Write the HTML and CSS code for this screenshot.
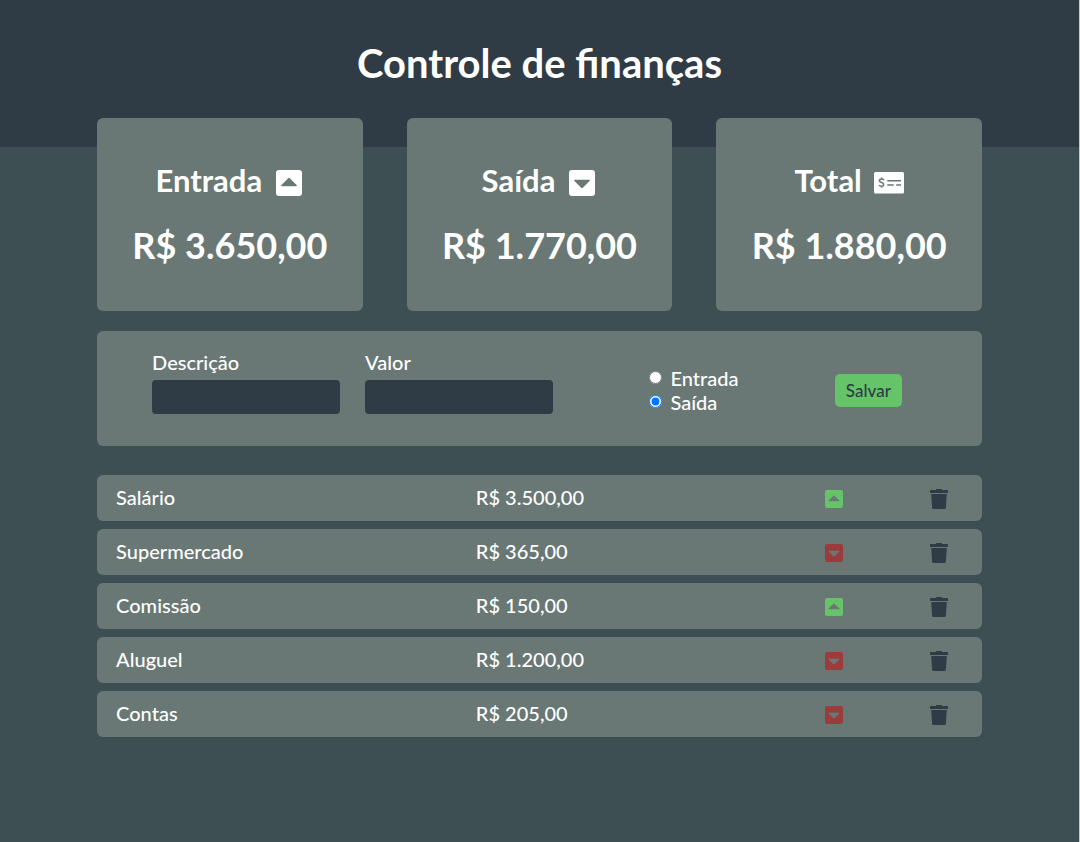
FILE: index.html
```html
<!DOCTYPE html>
<html lang="pt-BR">
<head>
<meta charset="utf-8">
<meta name="viewport" content="width=device-width, initial-scale=1">
<title>Controle de finanças</title>
<link rel="stylesheet" href="styles.css">
</head>
<body>
<svg class="sprite" aria-hidden="true">
  <symbol id="caret-up" viewBox="0 0 26 26">
    <path fill-rule="evenodd" d="M3 0H23A3 3 0 0 1 26 3V23A3 3 0 0 1 23 26H3A3 3 0 0 1 0 23V3A3 3 0 0 1 3 0ZM12.2 8.2L5.2 15.2Q4.800 16.300 6 16.300H20Q21.200 16.300 20.800 15.200L13.800 8.200Q13 7.500 12.200 8.200Z"/>
  </symbol>
  <symbol id="caret-down" viewBox="0 0 26 26">
    <path fill-rule="evenodd" d="M3 0H23A3 3 0 0 1 26 3V23A3 3 0 0 1 23 26H3A3 3 0 0 1 0 23V3A3 3 0 0 1 3 0ZM12.200 17.800L5.200 10.800Q4.800 9.700 6 9.700H20Q21.200 9.700 20.800 10.800L13.800 17.800Q13 18.500 12.200 17.800Z"/>
  </symbol>
  <symbol id="check" viewBox="0 0 30 22">
    <rect width="30" height="21.500" rx="1.500"/>
    <path class="cut" d="M10 7.900C9.300 7.300 8.600 7.100 7.600 7.100C6.200 7.100 5.400 7.700 5.400 8.700C5.400 11.100 9.700 9.900 9.700 12.500C9.700 13.600 8.900 14.200 7.500 14.200C6.400 14.200 5.600 13.900 4.900 13.300M7.600 5.500V7.200M7.600 14V15.700M13.300 8.700H27M13.300 12.900H19.700M22.200 12.900H27"/>
  </symbol>
  <symbol id="trash" viewBox="0 0 18 20">
    <path d="M6 1V.6Q6 0 6.600 0H11.400Q12 0 12 .6V1H17.400Q18 1 18 1.600V3.400Q18 4 17.400 4H.6Q0 4 0 3.400V1.600Q0 1 .6 1ZM1.200 5H16.800L15.900 18.500Q15.800 20 14.400 20H3.600Q2.200 20 2.100 18.500Z"/>
  </symbol>
</svg>

<header class="header">
  <h1 class="title">Controle de finanças</h1>
</header>

<main class="content">
  <section class="cards">
    <article class="card">
      <h2 class="card-title">Entrada <svg class="card-icon"><use href="#caret-up"/></svg></h2>
      <p class="card-amount">R$ 3.650,00</p>
    </article>
    <article class="card">
      <h2 class="card-title">Saída <svg class="card-icon"><use href="#caret-down"/></svg></h2>
      <p class="card-amount">R$ 1.770,00</p>
    </article>
    <article class="card">
      <h2 class="card-title">Total <svg class="card-icon card-icon-wide"><use href="#check"/></svg></h2>
      <p class="card-amount">R$ 1.880,00</p>
    </article>
  </section>

  <form class="form">
    <div class="fields">
      <div class="field">
        <label class="field-label" for="desc">Descrição</label>
        <input class="text-input" id="desc" type="text">
      </div>
      <div class="field">
        <label class="field-label" for="valor">Valor</label>
        <input class="text-input" id="valor" type="number">
      </div>
    </div>
    <div class="options">
      <div class="option">
        <input class="radio" type="radio" id="entrada" name="tipo">
        <label for="entrada">Entrada</label>
      </div>
      <div class="option">
        <input class="radio" type="radio" id="saida" name="tipo" checked>
        <label for="saida">Saída</label>
      </div>
    </div>
    <button class="save" type="button">Salvar</button>
  </form>

  <table class="entries">
    <colgroup><col class="col-desc"><col class="col-value"><col class="col-type"><col class="col-action"></colgroup>
    <tbody>
      <tr><td>Salário</td><td>R$ 3.500,00</td><td><svg class="type income"><use href="#caret-up"/></svg></td><td><button class="remove" type="button" aria-label="Excluir Salário"><svg class="trash"><use href="#trash"/></svg></button></td></tr>
      <tr><td>Supermercado</td><td>R$ 365,00</td><td><svg class="type expense"><use href="#caret-down"/></svg></td><td><button class="remove" type="button" aria-label="Excluir Supermercado"><svg class="trash"><use href="#trash"/></svg></button></td></tr>
      <tr><td>Comissão</td><td>R$ 150,00</td><td><svg class="type income"><use href="#caret-up"/></svg></td><td><button class="remove" type="button" aria-label="Excluir Comissão"><svg class="trash"><use href="#trash"/></svg></button></td></tr>
      <tr><td>Aluguel</td><td>R$ 1.200,00</td><td><svg class="type expense"><use href="#caret-down"/></svg></td><td><button class="remove" type="button" aria-label="Excluir Aluguel"><svg class="trash"><use href="#trash"/></svg></button></td></tr>
      <tr><td>Contas</td><td>R$ 205,00</td><td><svg class="type expense"><use href="#caret-down"/></svg></td><td><button class="remove" type="button" aria-label="Excluir Contas"><svg class="trash"><use href="#trash"/></svg></button></td></tr>
    </tbody>
  </table>
</main>
</body>
</html>
```

FILE: styles.css
```css
:root {
  --dark: #2f3c46;
  --page: #3d4f53;
  --panel: #697874;
  --green: #65c368;
  --red: #9c3b3c;
}

* {
  box-sizing: border-box;
  margin: 0;
  padding: 0;
}

html {
  background: var(--page);
}

body {
  min-height: 100vh;
  border-right: 1px solid #c3cbcb;
  color: #fff;
  font-family: Lato, sans-serif;
  font-size: 20px;
  font-weight: 500;
  line-height: 24px;
}

.sprite {
  display: none;
}

.header {
  padding: 39px 16px 60px;
  background: var(--dark);
  text-align: center;
}

.title {
  font-size: 40px;
  line-height: 48px;
}

.content {
  width: 82%;
  margin: -29px auto 0;
}

.cards {
  display: flex;
  justify-content: space-between;
}

.card {
  width: 30%;
  padding: 44px 0 43px;
  border-radius: 6px;
  background: var(--panel);
  text-align: center;
}

.card-title {
  display: flex;
  align-items: center;
  justify-content: center;
  gap: 12px;
  margin-bottom: 24px;
  font-size: 31px;
  line-height: 36px;
}

.card-icon {
  width: 26px;
  height: 26px;
  margin: 6px 2px 0;
  fill: #fff;
}

.card-icon-wide {
  width: 30px;
  height: 22px;
  margin: 6px 0 0;
}

.cut {
  fill: none;
  stroke: var(--panel);
  stroke-width: 1.5;
}

.card-amount {
  font-size: 36px;
  font-weight: 700;
  line-height: 46px;
}

.form {
  display: flex;
  align-items: center;
  justify-content: space-between;
  margin-top: 20px;
  padding: 20px 80px 32px 55px;
  border-radius: 6px;
  background: var(--panel);
}

.fields {
  display: flex;
  gap: 25px;
}

.field {
  display: flex;
  flex-direction: column;
  gap: 7px;
}

.field-label {
  line-height: 22px;
}

.text-input {
  width: 188px;
  height: 34px;
  padding: 0 8px;
  border: 0;
  border-radius: 4px;
  background: var(--dark);
  color: #fff;
  font: inherit;
}

.options {
  padding-top: 15px;
}

.option {
  display: flex;
  align-items: flex-start;
  gap: 8px;
}

.radio {
  width: 13px;
  height: 13px;
  margin-top: 5px;
}

.save {
  margin-top: 16px;
  padding: 6px 11px;
  border: 0;
  border-radius: 5px;
  background: var(--green);
  color: var(--dark);
  font: 500 17px/21px Lato, sans-serif;
}

.entries {
  width: 100%;
  margin-top: 21px;
  border-spacing: 0 8px;
  table-layout: fixed;
}

.entries td {
  height: 46px;
  padding: 0 16px 3px;
  background: var(--panel);
}

.entries td:first-child {
  padding-left: 19px;
  border-radius: 6px 0 0 6px;
}

.entries td:last-child {
  border-radius: 0 6px 6px 0;
}

.entries td:nth-child(n + 3) {
  padding: 0;
  text-align: center;
}

.col-desc {
  width: 41%;
}

.col-value {
  width: 35.3%;
}

.col-type {
  width: 14%;
}

.col-action {
  width: 9.7%;
}

.type {
  display: block;
  width: 18px;
  height: 18px;
  margin: 2px auto 0;
}

.income {
  fill: var(--green);
}

.expense {
  fill: var(--red);
}

.remove {
  display: block;
  margin: 2px auto 0;
  border: 0;
  background: none;
  cursor: pointer;
}

.trash {
  display: block;
  width: 18px;
  height: 20px;
  fill: var(--dark);
}
```
